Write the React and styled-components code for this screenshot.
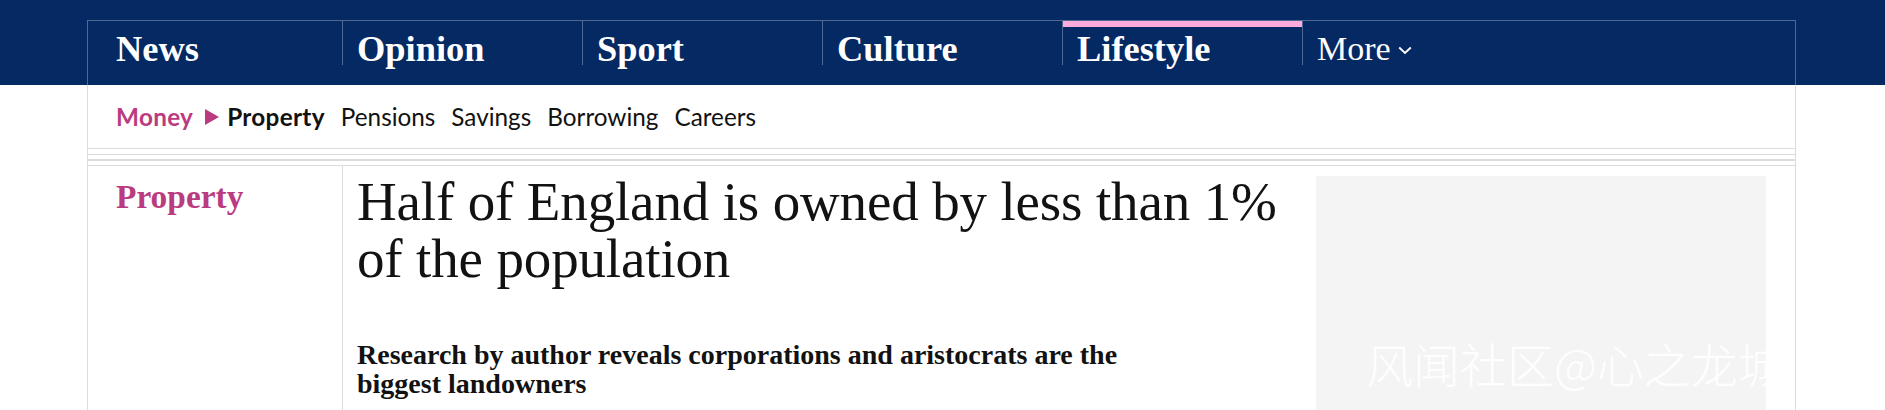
import React from "react";
import styled, { createGlobalStyle } from "styled-components";

const GlobalStyle = createGlobalStyle`
  html, body { margin: 0; padding: 0; background: #fff; overflow: hidden; }
  body { font-family: "Liberation Serif", "Times New Roman", serif; color: #121212; }
`;

const Page = styled.div`
  position: relative;
  height: 410px;
  overflow: hidden;
`;

const Masthead = styled.header`
  background: #052962;
  padding-top: 20px;
`;

const NavFrame = styled.nav`
  width: 1709px;
  margin: 0 0 0 87px;
  box-sizing: border-box;
  height: 65px;
  border: 1px solid #506991;
  border-bottom: none;
  padding-left: 14px;
  display: flex;
  align-items: flex-start;
`;

const PillarItem = styled.a`
  box-sizing: border-box;
  width: 240px;
  height: 44px;
  padding: 10px 0 0 14px;
  border-left: ${(p) => (p.$first ? "none" : "1px solid #506991")};
  box-shadow: ${(p) => (p.$active ? "inset 0 6px 0 #ffabdb" : "none")};
  font-family: "Liberation Serif", serif;
  font-weight: ${(p) => (p.$light ? 400 : 700)};
  font-size: ${(p) => (p.$light ? "34px" : "36.4px")};
  line-height: 36px;
  color: #fff;
  text-decoration: none;
  white-space: nowrap;
  display: flex;
  align-items: flex-start;
`;

const Chevron = styled.svg`
  width: 14px;
  height: 9px;
  margin: 15px 0 0 7px;
  flex: none;
`;

const Frame = styled.main`
  width: 1709px;
  margin: 0 0 0 87px;
  box-sizing: border-box;
  border-left: 1px solid #dcdcdc;
  border-right: 1px solid #dcdcdc;
`;

const SubNav = styled.nav`
  display: flex;
  align-items: center;
  padding: 18px 0 17px 28px;
  font-family: Lato, "Liberation Sans", sans-serif;
  font-size: 24.3px;
  line-height: 28px;
`;

const SubLink = styled.a`
  color: ${(p) => (p.$pink ? "#bb3b80" : "#121212")};
  font-weight: ${(p) => (p.$bold ? 700 : 400)};
  letter-spacing: ${(p) => (p.$bold ? "0.3px" : "0")};
  text-decoration: none;
  margin-right: ${(p) => p.$gap ?? 16}px;
  white-space: nowrap;
`;

const Crumb = styled.svg`
  width: 14px;
  height: 16px;
  margin-right: 8px;
  flex: none;
`;

const Rules = styled.div`
  height: 18px;
  background: repeating-linear-gradient(
    to bottom,
    #dcdcdc 0,
    #dcdcdc 1.4px,
    transparent 1.4px,
    transparent 5.67px
  );
`;

const Content = styled.div`
  display: grid;
  grid-template-columns: 240px 974px 450px;
  padding-left: 14px;
  min-height: 260px;
`;

const SectionLabel = styled.a`
  display: block;
  padding: 13px 0 0 14px;
  font-family: "Liberation Serif", serif;
  font-weight: 700;
  font-size: 33.4px;
  line-height: 36px;
  color: #bb3b80;
  text-decoration: none;
`;

const Article = styled.article`
  border-left: 1px solid #dcdcdc;
  padding: 7px 14px 0;
`;

const Headline = styled.h1`
  margin: 0;
  font-family: "Liberation Serif", serif;
  font-weight: 400;
  font-size: 55px;
  line-height: 57px;
  letter-spacing: -0.15px;
  color: #121212;
`;

const Standfirst = styled.p`
  margin: 54px 0 0;
  max-width: 810px;
  font-family: "Liberation Serif", serif;
  font-weight: 700;
  font-size: 28px;
  line-height: 28.5px;
  color: #121212;
`;

const Aside = styled.aside`
  padding-top: 10px;
`;

const AdSlot = styled.div`
  width: 450px;
  height: 260px;
  background: #f4f4f4;
`;

const Watermark = styled.div`
  position: absolute;
  left: 1366px;
  top: 338px;
  font-family: "Noto Sans CJK SC", sans-serif;
  font-weight: 300;
  font-size: 47px;
  line-height: 50px;
  color: rgba(255, 255, 255, 0.95);
  white-space: nowrap;
  pointer-events: none;
`;

const pillars = ["News", "Opinion", "Sport", "Culture", "Lifestyle"];
const subItems = ["Pensions", "Savings", "Borrowing", "Careers"];

export default function App() {
  return (
    <Page>
      <GlobalStyle />
      <Masthead>
        <NavFrame>
          {pillars.map((p, i) => (
            <PillarItem key={p} href="#" $first={i === 0} $active={p === "Lifestyle"}>
              {p}
            </PillarItem>
          ))}
          <PillarItem href="#" $light>
            More
            <Chevron viewBox="0 0 14 9">
              <path d="M1.2 1.5 L7 7 L12.8 1.5" fill="none" stroke="#fff" strokeWidth="1.9" />
            </Chevron>
          </PillarItem>
        </NavFrame>
      </Masthead>
      <Frame>
        <SubNav>
          <SubLink href="#" $pink $bold $gap={12}>Money</SubLink>
          <Crumb viewBox="0 0 14 16">
            <polygon points="0,0 14,8 0,16" fill="#bb3b80" />
          </Crumb>
          <SubLink href="#" $bold>Property</SubLink>
          {subItems.map((s) => (
            <SubLink key={s} href="#">{s}</SubLink>
          ))}
        </SubNav>
        <Rules />
        <Content>
          <div>
            <SectionLabel href="#">Property</SectionLabel>
          </div>
          <Article>
            <Headline>Half of England is owned by less than 1% of the population</Headline>
            <Standfirst>
              Research by author reveals corporations and aristocrats are the biggest landowners
            </Standfirst>
          </Article>
          <Aside>
            <AdSlot />
          </Aside>
        </Content>
      </Frame>
      <Watermark>风闻社区@心之龙城</Watermark>
    </Page>
  );
}
